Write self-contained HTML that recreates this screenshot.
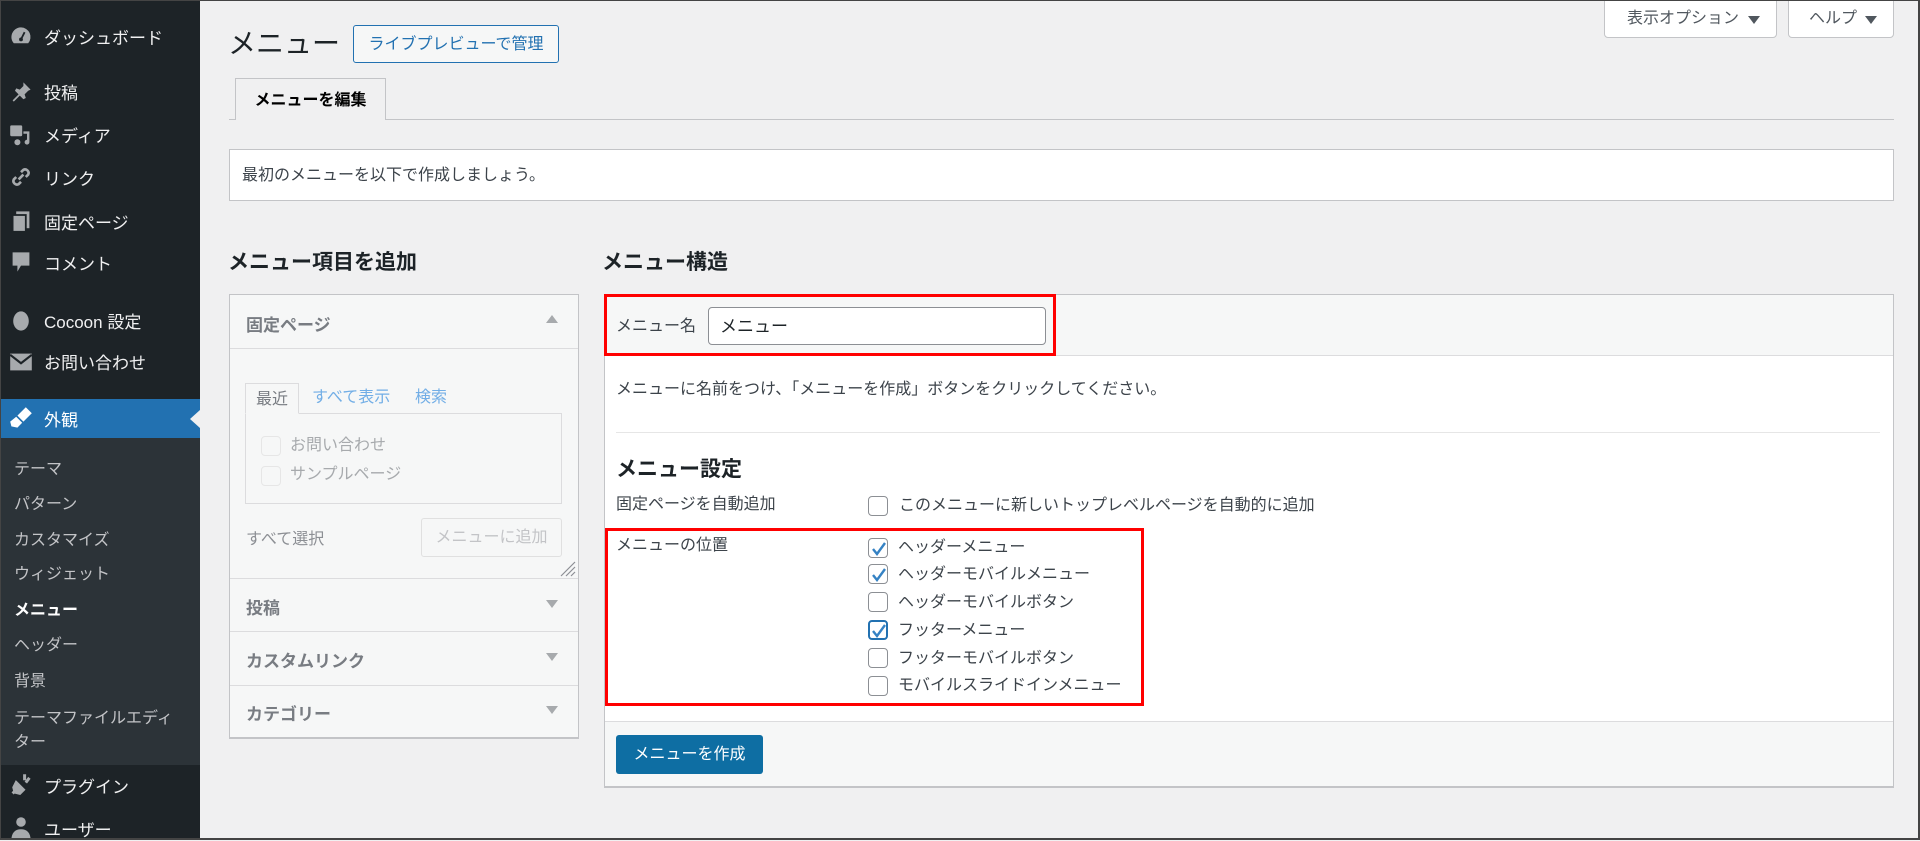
<!DOCTYPE html>
<html><head><meta charset="utf-8">
<style>
*{box-sizing:border-box;margin:0;padding:0}
body{width:1920px;height:840px;overflow:hidden;background:#f0f0f1;font-family:"Liberation Sans","Noto Sans CJK JP",sans-serif;color:#3c434a;position:relative;font-size:16px}
.a{position:absolute;white-space:nowrap}
#frame{position:absolute;left:0;top:0;width:1920px;height:840px;border:1px solid #444;border-right-width:2px;border-bottom-width:2px;pointer-events:none;z-index:10}
#side{position:absolute;left:0;top:0;width:200px;height:840px;background:#1d2327}
.mi{position:absolute;left:44px;color:#f0f0f1;font-size:17px;line-height:20px;margin-top:2px}
.ic{position:absolute;left:9px;width:24px;height:24px}
.sub{position:absolute;left:14px;color:#c3c4c7;font-size:16px;line-height:20px;margin-top:2px}
.cb{position:absolute;width:20px;height:20px;border:1px solid #8c8f94;border-radius:4px;background:#fff}
.cb svg{position:absolute;left:1px;top:1px}
.lbl{position:absolute;font-size:16px;line-height:20px;color:#3c434a;margin-top:1px}
.tri{position:absolute;width:0;height:0;border-left:6px solid transparent;border-right:6px solid transparent}
</style></head><body>
<div id="side">
  <svg class="ic" style="top:25px" viewBox="0 0 20 20"><path d="M10 2a8 8 0 0 0-8 8c0 2 .7 3.8 2 5.2h12A8 8 0 0 0 10 2z" fill="#a7aaad"/><circle cx="10" cy="12" r="1.6" fill="#1d2327"/><path d="M10 12l3-6" stroke="#1d2327" stroke-width="1.5"/></svg>
  <div class="mi" style="top:27px">ダッシュボード</div>
  <svg class="ic" style="top:80px" viewBox="0 0 20 20"><path d="M12 2l6 6-2 1-3 3 1 3-2 1-3-3-5 5-1-1 5-5-3-3 1-2 3 1 3-3z" fill="#a7aaad"/></svg>
  <div class="mi" style="top:82px">投稿</div>
  <svg class="ic" style="top:123px" viewBox="0 0 20 20"><rect x="1" y="2" width="10" height="9" rx="1" fill="#a7aaad"/><path d="M12 7h5v9a2 2 0 1 1-2-2V9h-3z" fill="#a7aaad"/><circle cx="7" cy="16" r="2.5" fill="#a7aaad"/></svg>
  <div class="mi" style="top:125px">メディア</div>
  <svg class="ic" style="top:165px" viewBox="0 0 20 20"><path d="M8 12l4-4M6 10l-2 2a3 3 0 0 0 4 4l2-2M14 10l2-2a3 3 0 0 0-4-4l-2 2" stroke="#a7aaad" stroke-width="2.2" fill="none"/></svg>
  <div class="mi" style="top:168px">リンク</div>
  <svg class="ic" style="top:209px" viewBox="0 0 20 20"><rect x="6" y="2" width="11" height="14" fill="#a7aaad"/><rect x="3" y="5" width="11" height="14" fill="#a7aaad" stroke="#1d2327" stroke-width="1.5"/></svg>
  <div class="mi" style="top:212px">固定ページ</div>
  <svg class="ic" style="top:250px" viewBox="0 0 20 20"><path d="M3 2h14v11H10l-3 5v-5H3z" fill="#a7aaad"/></svg>
  <div class="mi" style="top:253px">コメント</div>
  <svg class="ic" style="top:309px" viewBox="0 0 20 20"><ellipse cx="10" cy="10" rx="6.5" ry="8" fill="#a7aaad"/></svg>
  <div class="mi" style="top:311px">Cocoon 設定</div>
  <svg class="ic" style="top:350px" viewBox="0 0 20 20"><rect x="1" y="3" width="18" height="14" fill="#a7aaad"/><path d="M1 4l9 7 9-7" stroke="#1d2327" stroke-width="1.8" fill="none"/></svg>
  <div class="mi" style="top:352px">お問い合わせ</div>
  <div class="a" style="left:0;top:399px;width:200px;height:39px;background:#2271b1"></div>
  <div class="a" style="left:190px;top:410px;width:0;height:0;border-top:9px solid transparent;border-bottom:9px solid transparent;border-right:10px solid #f0f0f1"></div>
  <svg class="ic" style="top:406px" viewBox="0 0 20 20"><path d="M14 1l5 5-7 7-5-5zM6 9l5 5-4 4-5-1-1-4z" fill="#fff"/></svg>
  <div class="mi" style="top:409px;color:#fff">外観</div>
  <div class="a" style="left:0;top:438px;width:200px;height:327px;background:#2c3338"></div>
  <div class="sub" style="top:458px">テーマ</div>
  <div class="sub" style="top:493px">パターン</div>
  <div class="sub" style="top:529px">カスタマイズ</div>
  <div class="sub" style="top:563px">ウィジェット</div>
  <div class="sub" style="top:599px;color:#fff;font-weight:bold">メニュー</div>
  <div class="sub" style="top:634px">ヘッダー</div>
  <div class="sub" style="top:670px">背景</div>
  <div class="sub" style="top:705px;line-height:24px">テーマファイルエディ<br>ター</div>
  <svg class="ic" style="top:773px" viewBox="0 0 20 20"><path d="M13 1v5M17 4l-3 4M3 17l4-4M6 8l6 6-3 3-4-1-1-4z" stroke="#a7aaad" stroke-width="2.5" fill="#a7aaad"/></svg>
  <div class="mi" style="top:776px">プラグイン</div>
  <svg class="ic" style="top:816px" viewBox="0 0 20 20"><circle cx="10" cy="5" r="4" fill="#a7aaad"/><path d="M2 20c0-6 3-9 8-9s8 3 8 9z" fill="#a7aaad"/></svg>
  <div class="mi" style="top:819px">ユーザー</div>
</div>

<div class="a" style="left:1604px;top:-1px;width:173px;height:39px;background:#fff;border:1px solid #c3c4c7;border-radius:0 0 4px 4px;font-size:16px;color:#50575e;line-height:38px;padding-left:22px">表示オプション</div>
<div class="tri" style="left:1748px;top:16px;border-top:8px solid #50575e"></div>
<div class="a" style="left:1788px;top:-1px;width:106px;height:39px;background:#fff;border:1px solid #c3c4c7;border-radius:0 0 4px 4px;font-size:16px;color:#50575e;line-height:38px;padding-left:20px">ヘルプ</div>
<div class="tri" style="left:1865px;top:16px;border-top:8px solid #50575e"></div>

<div class="a" style="left:228px;top:26px;font-size:28px;line-height:36px;color:#1d2327">メニュー</div>
<div class="a" style="left:353px;top:25px;width:206px;height:38px;border:1px solid #2271b1;border-radius:3px;background:#f6f7f7;color:#2271b1;font-size:16px;line-height:38px;text-align:center">ライブプレビューで管理</div>

<div class="a" style="left:229px;top:119px;width:1665px;height:1px;background:#c3c4c7"></div>
<div class="a" style="left:235px;top:78px;width:151px;height:42px;background:#f0f0f1;border:1px solid #c3c4c7;border-bottom:none;font-weight:bold;font-size:16px;color:#000;line-height:44px;text-align:center">メニューを編集</div>

<div class="a" style="left:229px;top:149px;width:1665px;height:52px;background:#fff;border:1px solid #c3c4c7;font-size:16px;line-height:52px;padding-left:12px;color:#3c434a">最初のメニューを以下で作成しましょう。</div>

<div class="a" style="left:228px;top:250px;font-size:21px;font-weight:bold;color:#1d2327;line-height:26px">メニュー項目を追加</div>
<div class="a" style="left:602px;top:250px;font-size:21px;font-weight:bold;color:#1d2327;line-height:26px">メニュー構造</div>

<div class="a" style="left:229px;top:294px;width:350px;height:445px;background:#f6f7f7;border:1px solid #c3c4c7;border-bottom-width:2px"></div>
<div class="a" style="left:230px;top:348px;width:348px;height:1px;background:#dcdcde"></div>
<div class="a" style="left:246px;top:311px;font-weight:bold;color:#787c82;font-size:17px">固定ページ</div>
<div class="tri" style="left:546px;top:315px;border-bottom:8px solid #a7aaad"></div>
<div class="a" style="left:245px;top:413px;width:317px;height:91px;border:1px solid #dcdcde;background:#f6f7f7"></div>
<div class="a" style="left:245px;top:383px;width:54px;height:31px;border:1px solid #dcdcde;border-bottom:1px solid #f6f7f7;background:#f6f7f7;color:#787c82;font-size:16px;line-height:32px;text-align:center">最近</div>
<div class="a" style="left:312px;top:386px;color:#72aee6;font-size:16px;line-height:24px">すべて表示</div>
<div class="a" style="left:415px;top:386px;color:#72aee6;font-size:16px;line-height:24px">検索</div>
<div class="cb" style="left:261px;top:436px;border-color:#e6e6e6;background:#f6f7f7"></div>
<div class="a" style="left:290px;top:434px;color:#a7aaad;font-size:16px;line-height:24px">お問い合わせ</div>
<div class="cb" style="left:261px;top:466px;border-color:#e6e6e6;background:#f6f7f7"></div>
<div class="a" style="left:290px;top:463px;color:#a7aaad;font-size:16px;line-height:24px">サンプルページ</div>
<div class="a" style="left:246px;top:528px;color:#8c8f94;font-size:16px;line-height:24px">すべて選択</div>
<div class="a" style="left:421px;top:518px;width:141px;height:39px;border:1px solid #e0e0e0;border-radius:3px;background:#f6f7f7;color:#c3c4c7;font-size:16px;line-height:38px;text-align:center">メニューに追加</div>
<svg class="a" style="left:558px;top:559px" width="18" height="18"><path d="M17 3L3 17M17 8L8 17M17 13l-4 4" stroke="#8c8f94" stroke-width="1.2"/></svg>
<div class="a" style="left:230px;top:578px;width:348px;height:1px;background:#dcdcde"></div>
<div class="a" style="left:246px;top:594px;font-weight:bold;color:#787c82;font-size:17px">投稿</div>
<div class="tri" style="left:546px;top:600px;border-top:8px solid #a7aaad"></div>
<div class="a" style="left:230px;top:631px;width:348px;height:1px;background:#dcdcde"></div>
<div class="a" style="left:246px;top:647px;font-weight:bold;color:#787c82;font-size:17px">カスタムリンク</div>
<div class="tri" style="left:546px;top:653px;border-top:8px solid #a7aaad"></div>
<div class="a" style="left:230px;top:685px;width:348px;height:1px;background:#dcdcde"></div>
<div class="a" style="left:246px;top:700px;font-weight:bold;color:#787c82;font-size:17px">カテゴリー</div>
<div class="tri" style="left:546px;top:706px;border-top:8px solid #a7aaad"></div>

<div class="a" style="left:604px;top:294px;width:1290px;height:494px;background:#fff;border:1px solid #c3c4c7;border-bottom-width:2px"></div>
<div class="a" style="left:605px;top:295px;width:1288px;height:61px;background:#f6f7f7;border-bottom:1px solid #dcdcde"></div>
<div class="a" style="left:605px;top:721px;width:1288px;height:65px;background:#f6f7f7;border-top:1px solid #dcdcde"></div>
<div class="a" style="left:604px;top:294px;width:452px;height:62px;border:3px solid #f00"></div>
<div class="a" style="left:616px;top:317px;font-size:16px;line-height:20px">メニュー名</div>
<div class="a" style="left:708px;top:307px;width:338px;height:38px;background:#fff;border:1px solid #8c8f94;border-radius:4px;font-size:17px;line-height:37px;padding-left:11px;color:#1d2327">メニュー</div>
<div class="a" style="left:616px;top:380px;font-size:16px;line-height:20px">メニューに名前をつけ、「メニューを作成」ボタンをクリックしてください。</div>
<div class="a" style="left:616px;top:432px;width:1264px;height:1px;background:#e6e6e6"></div>
<div class="a" style="left:616px;top:457px;font-size:21px;font-weight:bold;color:#1d2327;line-height:26px">メニュー設定</div>
<div class="lbl" style="left:616px;top:494px">固定ページを自動追加</div>
<div class="cb" style="left:868px;top:496px"></div>
<div class="lbl" style="left:899px;top:495px">このメニューに新しいトップレベルページを自動的に追加</div>
<div class="a" style="left:605px;top:528px;width:539px;height:178px;border:3px solid #f00"></div>
<div class="lbl" style="left:616px;top:535px">メニューの位置</div>
<div class="cb" style="left:868px;top:538px"><svg width="18" height="18" viewBox="0 0 18 18"><path d="M3 9l4 5 8-11" stroke="#3582c4" stroke-width="2.4" fill="none"/></svg></div>
<div class="lbl" style="left:898px;top:537px">ヘッダーメニュー</div>
<div class="cb" style="left:868px;top:564px"><svg width="18" height="18" viewBox="0 0 18 18"><path d="M3 9l4 5 8-11" stroke="#3582c4" stroke-width="2.4" fill="none"/></svg></div>
<div class="lbl" style="left:898px;top:564px">ヘッダーモバイルメニュー</div>
<div class="cb" style="left:868px;top:592px"></div>
<div class="lbl" style="left:898px;top:592px">ヘッダーモバイルボタン</div>
<div class="cb" style="left:868px;top:620px;border:2px solid #2271b1"><svg width="18" height="18" viewBox="0 0 18 18" style="left:0;top:0"><path d="M3 9l4 5 8-11" stroke="#3582c4" stroke-width="2.4" fill="none"/></svg></div>
<div class="lbl" style="left:898px;top:620px">フッターメニュー</div>
<div class="cb" style="left:868px;top:648px"></div>
<div class="lbl" style="left:898px;top:648px">フッターモバイルボタン</div>
<div class="cb" style="left:868px;top:676px"></div>
<div class="lbl" style="left:898px;top:675px">モバイルスライドインメニュー</div>
<div class="a" style="left:616px;top:735px;width:147px;height:39px;background:#0e6ea3;border-radius:3px;color:#fff;font-size:16px;line-height:40px;text-align:center">メニューを作成</div>

<div id="frame"></div>
</body></html>
